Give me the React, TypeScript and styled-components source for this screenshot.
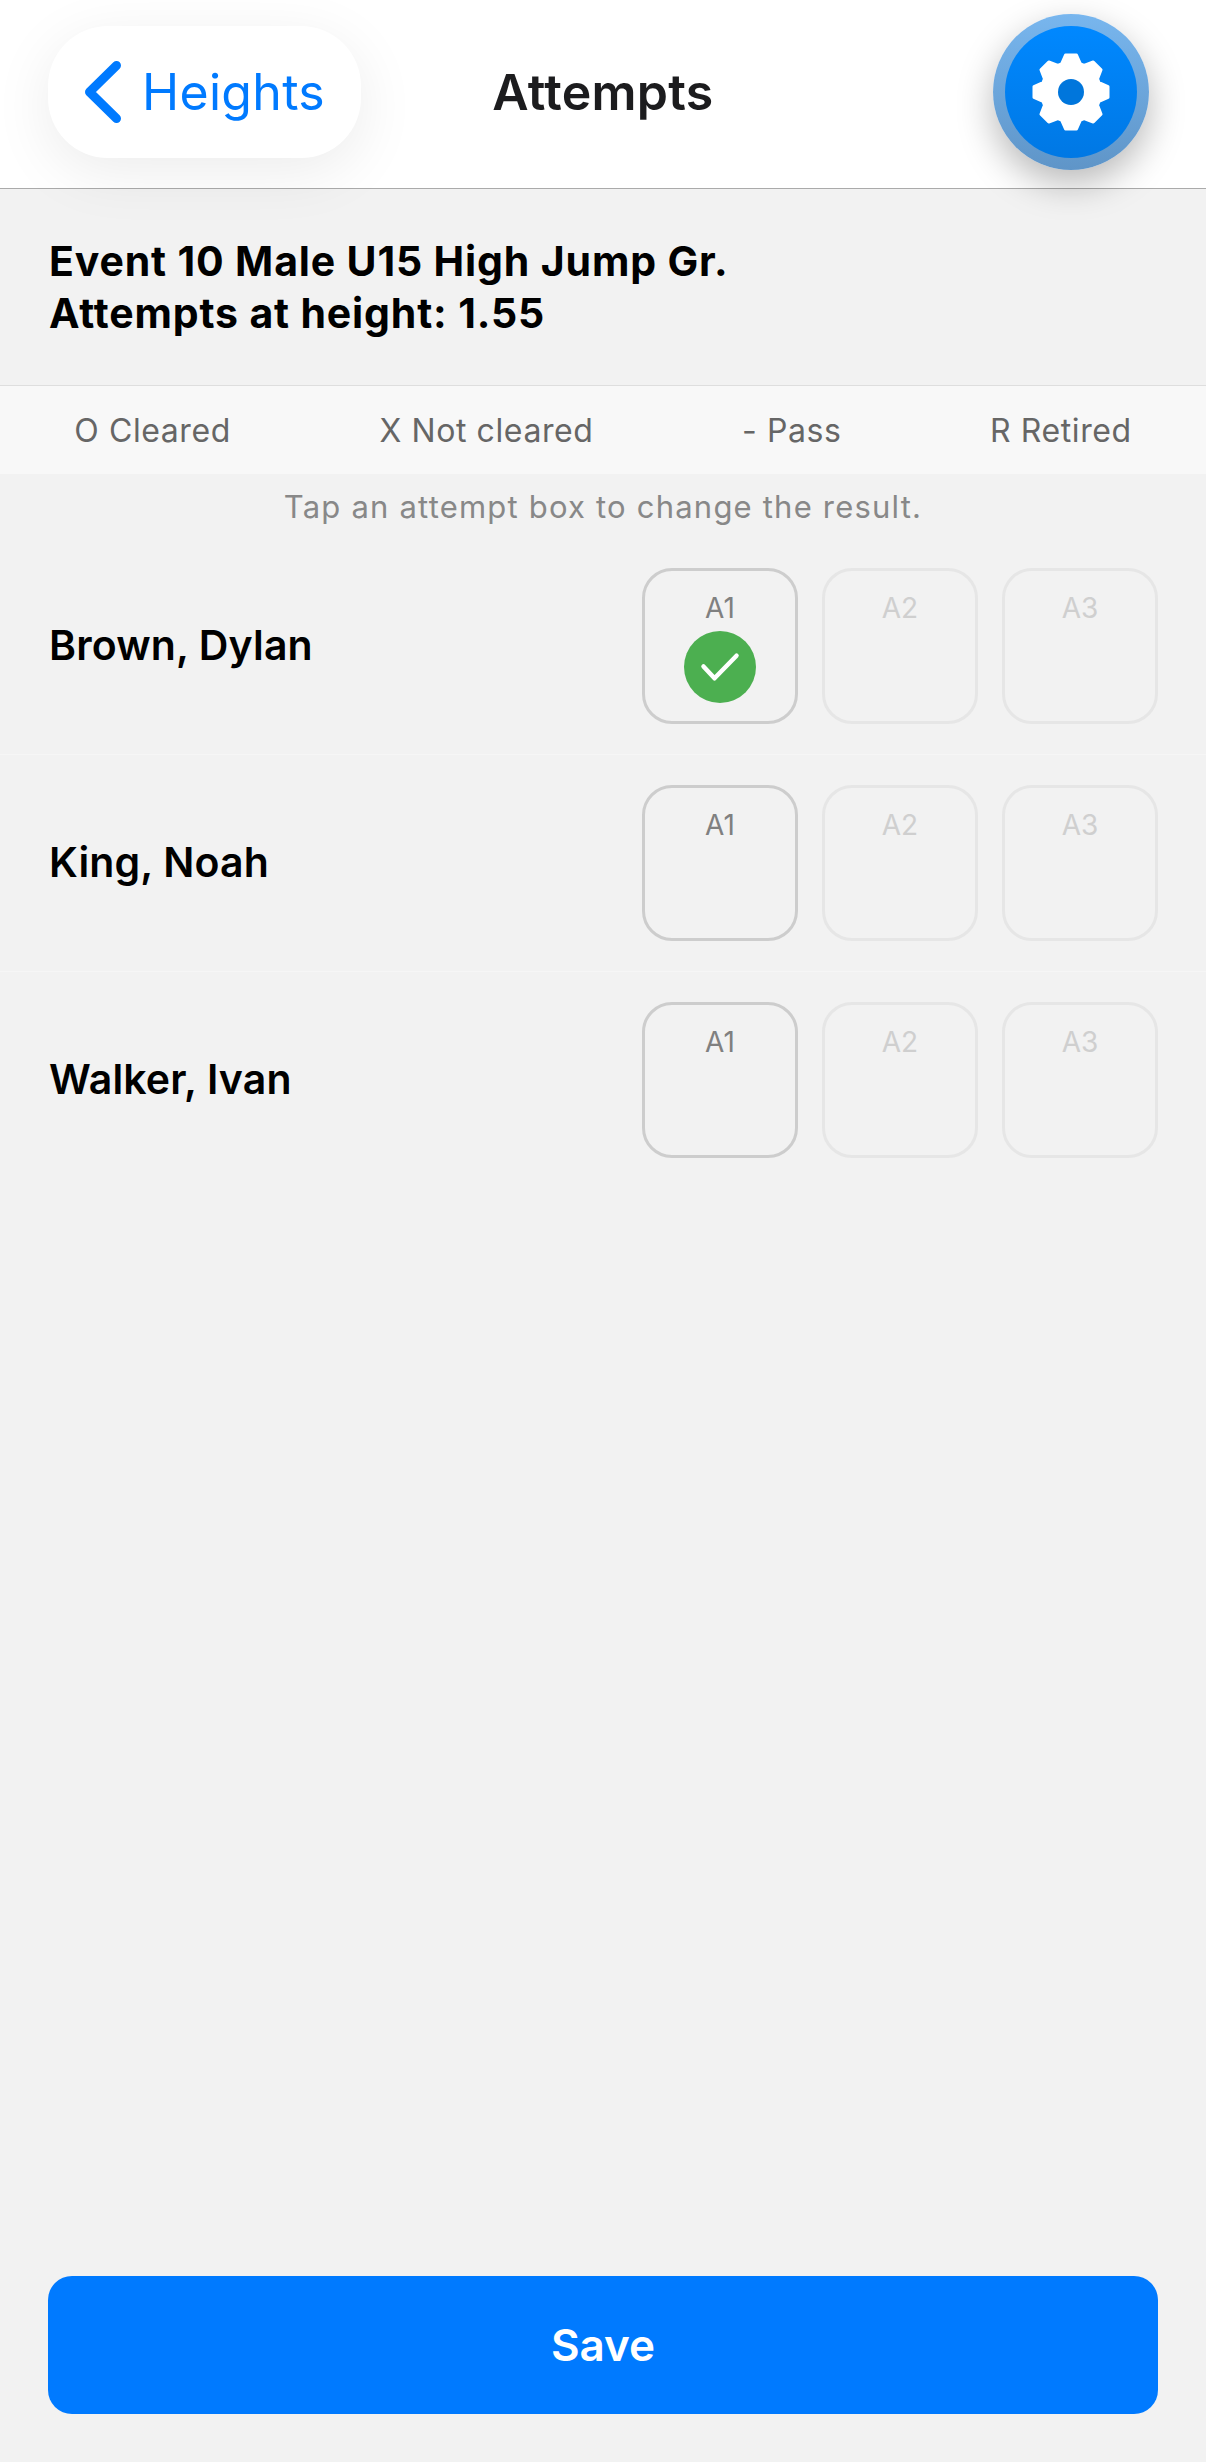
import styled, { createGlobalStyle } from 'styled-components';

const GlobalStyle = createGlobalStyle`
	html,
	body {
		margin: 0;
		padding: 0;
		background: #f2f2f2;
	}
	* {
		box-sizing: border-box;
	}
`;

const Page = styled.div`
	width: 1206px;
	height: 2462px;
	display: flex;
	flex-direction: column;
	overflow: hidden;
	background: #f2f2f2;
	font-family: Inter, 'Liberation Sans', sans-serif;
`;

const Header = styled.header`
	position: relative;
	z-index: 1;
	height: 189px;
	flex: none;
	padding: 0 48px 3.5px;
	display: grid;
	grid-template-columns: 1fr auto 1fr;
	align-items: center;
	background: #fff;
	border-bottom: 1.5px solid #aaa;
`;

const BackButton = styled.button`
	width: 313px;
	height: 132px;
	padding: 0 0 0 37px;
	display: flex;
	align-items: center;
	gap: 21px;
	border: none;
	border-radius: 60px;
	background: #fff;
	color: #007aff;
	font: 400 50px Inter, 'Liberation Sans', sans-serif;
	letter-spacing: 0.3px;
	box-shadow: 0 14px 60px rgba(0, 0, 0, 0.08);
`;

const Title = styled.h1`
	margin: 0;
	font-size: 50px;
	font-weight: 600;
	letter-spacing: 0.3px;
	color: #1c1c1e;
`;

const GearRing = styled.button`
	justify-self: end;
	margin-right: 9px;
	width: 156px;
	height: 156px;
	padding: 12px;
	border: none;
	border-radius: 50%;
	background: linear-gradient(#78b6ee, #5f95c8);
	box-shadow: 0 14px 36px rgba(0, 0, 0, 0.28);
`;

const GearCore = styled.div`
	width: 132px;
	height: 132px;
	display: flex;
	align-items: center;
	justify-content: center;
	border-radius: 50%;
	background: linear-gradient(#0088ff, #0078e4);
`;

const EventInfo = styled.div`
	height: 197px;
	flex: none;
	padding: 0 49px 1px;
	display: flex;
	flex-direction: column;
	justify-content: center;
	border-bottom: 1px solid #dedede;
	color: #000;
	font-size: 41px;
	font-weight: 700;
	letter-spacing: 0.85px;
	line-height: 52px;
`;

const Legend = styled.div`
	height: 88px;
	flex: none;
	display: flex;
	align-items: center;
	justify-content: space-around;
	background: #f8f8f8;
`;

const LegendItem = styled.span`
	font-size: 32px;
	letter-spacing: 0.6px;
	color: #666;
`;

const Hint = styled.p`
	margin: 0;
	height: 64px;
	flex: none;
	display: flex;
	align-items: center;
	justify-content: center;
	font-size: 31px;
	letter-spacing: 1.2px;
	color: #888;
`;

const AthleteList = styled.div`
	display: flex;
	flex-direction: column;
`;

const AthleteRow = styled.div`
	height: 217px;
	padding: 30px 48px 0 49px;
	display: flex;
	justify-content: space-between;
	border-bottom: 1px solid #f6f6f6;
	&:last-child {
		border-bottom: none;
	}
`;

const AthleteName = styled.span`
	height: 156px;
	padding-bottom: 2px;
	display: flex;
	align-items: center;
	color: #000;
	font-size: 41px;
	font-weight: 600;
	letter-spacing: 0.15px;
`;

const Attempts = styled.div`
	display: flex;
	gap: 24px;
`;

const AttemptBox = styled.div<{ $active?: boolean }>`
	width: 156px;
	height: 156px;
	padding-top: 19px;
	display: flex;
	flex-direction: column;
	align-items: center;
	gap: 5px;
	border: 3px solid ${p => (p.$active ? '#cdcdcd' : '#e6e6e6')};
	border-radius: 30px;
`;

const AttemptLabel = styled.span<{ $active?: boolean }>`
	font-size: 28px;
	line-height: 36px;
	color: ${p => (p.$active ? '#808080' : '#cfcfcf')};
`;

const Footer = styled.div`
	margin-top: auto;
	padding: 0 48px 48px;
`;

const SaveButton = styled.button`
	width: 100%;
	height: 138px;
	border: none;
	border-radius: 24px;
	background: #007aff;
	color: #fff;
	font: 600 44px Inter, 'Liberation Sans', sans-serif;
`;

// 8 tooth gear outline, centre at 40,40
const gearPath = () => {
	const teeth = 8;
	const points: string[] = [];
	for (let i = 0; i < teeth; i++) {
		const a = (i * Math.PI * 2) / teeth - Math.PI / 2;
		const at = (r: number, off: number) => {
			const x = 40 + r * Math.cos(a) - off * Math.sin(a);
			const y = 40 + r * Math.sin(a) + off * Math.cos(a);
			return `${x.toFixed(2)} ${y.toFixed(2)}`;
		};
		points.push(at(28, -9.5), at(37, -5.5), at(37, 5.5), at(28, 9.5));
	}
	return `M${points.join('L')}Z`;
};

const GearIcon = () => (
	<svg width='80' height='80' viewBox='0 0 80 80'>
		<path d={gearPath()} fill='#fff' stroke='#fff' strokeWidth='3' strokeLinejoin='round' />
		<circle cx='40' cy='40' r='13' fill='#0076dc' />
	</svg>
);

const ChevronIcon = () => (
	<svg width='36' height='62' viewBox='0 0 36 62' fill='none'>
		<path d='M31.5 4.5 4.5 31l27 26.5' stroke='#007aff' strokeWidth='9' strokeLinecap='round' strokeLinejoin='round' />
	</svg>
);

const CheckBadge = () => (
	<svg width='72' height='72' viewBox='0 0 72 72'>
		<circle cx='36' cy='36' r='36' fill='#4caf50' />
		<path d='M19.5 35.5 30.5 47.3 52.5 24.7' fill='none' stroke='#fff' strokeWidth='4.5' strokeLinecap='round' strokeLinejoin='round' />
	</svg>
);

const athletes = [
	{ name: 'Brown, Dylan', cleared: true },
	{ name: 'King, Noah', cleared: false },
	{ name: 'Walker, Ivan', cleared: false },
];

const App = () => {
	return (
		<Page>
			<GlobalStyle />

			<Header>
				<BackButton type='button'>
					<ChevronIcon />
					Heights
				</BackButton>
				<Title>Attempts</Title>
				<GearRing type='button'>
					<GearCore>
						<GearIcon />
					</GearCore>
				</GearRing>
			</Header>

			<EventInfo>
				<div>Event 10 Male U15 High Jump Gr.</div>
				<div>Attempts at height: 1.55</div>
			</EventInfo>

			<Legend>
				<LegendItem>O Cleared</LegendItem>
				<LegendItem>X Not cleared</LegendItem>
				<LegendItem>- Pass</LegendItem>
				<LegendItem>R Retired</LegendItem>
			</Legend>

			<Hint>Tap an attempt box to change the result.</Hint>

			<AthleteList>
				{athletes.map(athlete => (
					<AthleteRow key={athlete.name}>
						<AthleteName>{athlete.name}</AthleteName>
						<Attempts>
							<AttemptBox $active>
								<AttemptLabel $active>A1</AttemptLabel>
								{athlete.cleared && <CheckBadge />}
							</AttemptBox>
							<AttemptBox>
								<AttemptLabel>A2</AttemptLabel>
							</AttemptBox>
							<AttemptBox>
								<AttemptLabel>A3</AttemptLabel>
							</AttemptBox>
						</Attempts>
					</AthleteRow>
				))}
			</AthleteList>

			<Footer>
				<SaveButton type='button'>Save</SaveButton>
			</Footer>
		</Page>
	);
};

export default App;
